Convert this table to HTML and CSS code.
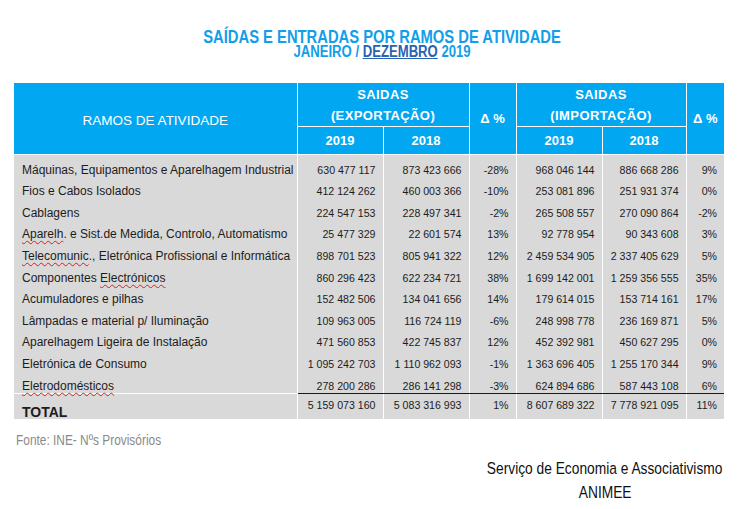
FILE: index.html
```html
<!DOCTYPE html>
<html lang="pt">
<head>
<meta charset="utf-8">
<title>Saídas e Entradas por Ramos de Atividade</title>
<link rel="stylesheet" href="styles.css">
</head>
<body>
<div class="page">
  <header class="titles">
    <h1 class="title"><span class="narrow">SAÍDAS E ENTRADAS POR RAMOS DE ATIVIDADE</span></h1>
    <p class="subtitle"><span class="narrow">JANEIRO / <span class="month">DEZEMBRO</span> 2019</span></p>
  </header>

  <table class="data">
    <colgroup>
      <col class="c-name"><col class="c-num"><col class="c-num"><col class="c-pct">
      <col class="c-num"><col class="c-num2"><col class="c-pct2">
    </colgroup>
    <thead>
      <tr class="h1row">
        <th rowspan="2" class="h-name">RAMOS DE ATIVIDADE</th>
        <th colspan="2" class="h-group">SAIDAS<br>(EXPORTAÇÃO)</th>
        <th rowspan="2" class="h-delta">Δ %</th>
        <th colspan="2" class="h-group">SAIDAS<br>(IMPORTAÇÃO)</th>
        <th rowspan="2" class="h-delta">Δ %</th>
      </tr>
      <tr class="h2row">
        <th class="h-year">2019</th>
        <th class="h-year">2018</th>
        <th class="h-year">2019</th>
        <th class="h-year">2018</th>
      </tr>
    </thead>
    <tbody>
      <tr><td class="name">Máquinas, Equipamentos e Aparelhagem Industrial</td><td>630 477 117</td><td>873 423 666</td><td>-28%</td><td>968 046 144</td><td>886 668 286</td><td>9%</td></tr>
      <tr><td class="name">Fios e Cabos Isolados</td><td>412 124 262</td><td>460 003 366</td><td>-10%</td><td>253 081 896</td><td>251 931 374</td><td>0%</td></tr>
      <tr><td class="name">Cablagens</td><td>224 547 153</td><td>228 497 341</td><td>-2%</td><td>265 508 557</td><td>270 090 864</td><td>-2%</td></tr>
      <tr><td class="name"><span class="spell">Aparelh</span>. e Sist.de Medida, Controlo, Automatismo</td><td>25 477 329</td><td>22 601 574</td><td>13%</td><td>92 778 954</td><td>90 343 608</td><td>3%</td></tr>
      <tr><td class="name"><span class="spell">Telecomunic</span>., Eletrónica Profissional e Informática</td><td>898 701 523</td><td>805 941 322</td><td>12%</td><td>2 459 534 905</td><td>2 337 405 629</td><td>5%</td></tr>
      <tr><td class="name">Componentes <span class="spell">Electrónicos</span></td><td>860 296 423</td><td>622 234 721</td><td>38%</td><td>1 699 142 001</td><td>1 259 356 555</td><td>35%</td></tr>
      <tr><td class="name">Acumuladores e pilhas</td><td>152 482 506</td><td>134 041 656</td><td>14%</td><td>179 614 015</td><td>153 714 161</td><td>17%</td></tr>
      <tr><td class="name">Lâmpadas e material p/ Iluminação</td><td>109 963 005</td><td>116 724 119</td><td>-6%</td><td>248 998 778</td><td>236 169 871</td><td>5%</td></tr>
      <tr><td class="name">Aparelhagem Ligeira de Instalação</td><td>471 560 853</td><td>422 745 837</td><td>12%</td><td>452 392 981</td><td>450 627 295</td><td>0%</td></tr>
      <tr><td class="name">Eletrónica de Consumo</td><td>1 095 242 703</td><td>1 110 962 093</td><td>-1%</td><td>1 363 696 405</td><td>1 255 170 344</td><td>9%</td></tr>
      <tr class="last"><td class="name"><span class="spell">Eletrodomésticos</span></td><td>278 200 286</td><td>286 141 298</td><td>-3%</td><td>624 894 686</td><td>587 443 108</td><td>6%</td></tr>
      <tr class="total"><td class="name">TOTAL</td><td>5 159 073 160</td><td>5 083 316 993</td><td>1%</td><td>8 607 689 322</td><td>7 778 921 095</td><td>11%</td></tr>
    </tbody>
  </table>

  <p class="source"><span class="narrow left">Fonte: INE- Nºs Provisórios</span></p>

  <div class="sign">
    <p class="sign-line"><span class="narrow">Serviço de Economia e Associativismo</span></p>
    <p class="sign-org"><span class="narrow">ANIMEE</span></p>
  </div>
</div>
</body>
</html>
```

FILE: styles.css
```css
html, body {
  margin: 0;
  padding: 0;
  background: #ffffff;
}

.page {
  width: 740px;
  height: 509px;
  overflow: hidden;
  font-family: "Liberation Sans", Arial, sans-serif;
  color: #1a1a1a;
}

.narrow {
  display: inline-block;
  white-space: nowrap;
  transform: scaleX(0.82);
  transform-origin: center;
}

.narrow.left {
  transform-origin: left;
}

.titles {
  padding-top: 29px;
  text-align: center;
  font-weight: bold;
  color: #129ee8;
  padding-left: 24px;
}

.title {
  margin: 0;
  font-size: 18px;
  line-height: 16px;
  font-weight: bold;
}

.subtitle {
  margin: 0;
  font-size: 16px;
  line-height: 14px;
}

.month {
  color: #2a62b2;
  text-decoration: underline;
}

.data {
  margin: 24px 0 0 14px;
  width: 708px;
  border-collapse: collapse;
  table-layout: fixed;
  background: #d9d9d9;
}

.c-name { width: 283px; }
.c-num { width: 86px; }
.c-pct { width: 47px; }
.c-num2 { width: 84px; }
.c-pct2 { width: 38px; }

.data th {
  background: #02a7f2;
  color: #ffffff;
  font-weight: bold;
  font-size: 13px;
  padding: 0;
  border: 1px solid #ffffff;
  border-top: none;
}

.data th:first-child { border-left: none; }
.data th:last-child { border-right: none; }

.h1row th { height: 43px; }
.h2row th { height: 27px; }

.data th.h-name {
  font-weight: normal;
  font-size: 13.5px;
  padding-top: 4px;
}

.h-group {
  line-height: 21px;
  letter-spacing: 0.4px;
}

.h-delta {
  font-size: 13px;
}

.h-year {
  padding-top: 2px;
}

.data td {
  height: 21.6px;
  padding: 0 7px 0 0;
  text-align: right;
  vertical-align: bottom;
  font-size: 10.6px;
  line-height: 14px;
  border-left: 1px solid #ffffff;
  white-space: nowrap;
  color: #1c1c1c;
}

.data td.name {
  border-left: none;
  text-align: left;
  padding-left: 8px;
  font-size: 12px;
}

.spell {
  text-decoration: underline wavy #d42020;
  text-decoration-thickness: 1px;
  text-underline-offset: 2px;
}

.data tr.last td {
  border-bottom: 1px solid #1a1a1a;
}

.data tr.last td.name {
  border-bottom: 1px solid #ffffff;
}

.data tr.total td {
  height: 23px;
  vertical-align: middle;
  padding-bottom: 2px;
}

.data tr.total td.name {
  font-weight: bold;
  font-size: 14px;
  vertical-align: bottom;
  padding-bottom: 0;
}

.source {
  margin: 13px 0 0 16px;
  font-size: 14.5px;
  line-height: 16px;
  color: #8a8a8a;
}

.sign {
  margin: 13px 0 0 455px;
  width: 300px;
  text-align: center;
  font-size: 16.8px;
  color: #111111;
}

.sign-line {
  margin: 0;
  line-height: 16px;
}

.sign-org {
  margin: 8px 0 0;
  line-height: 16px;
}
```
